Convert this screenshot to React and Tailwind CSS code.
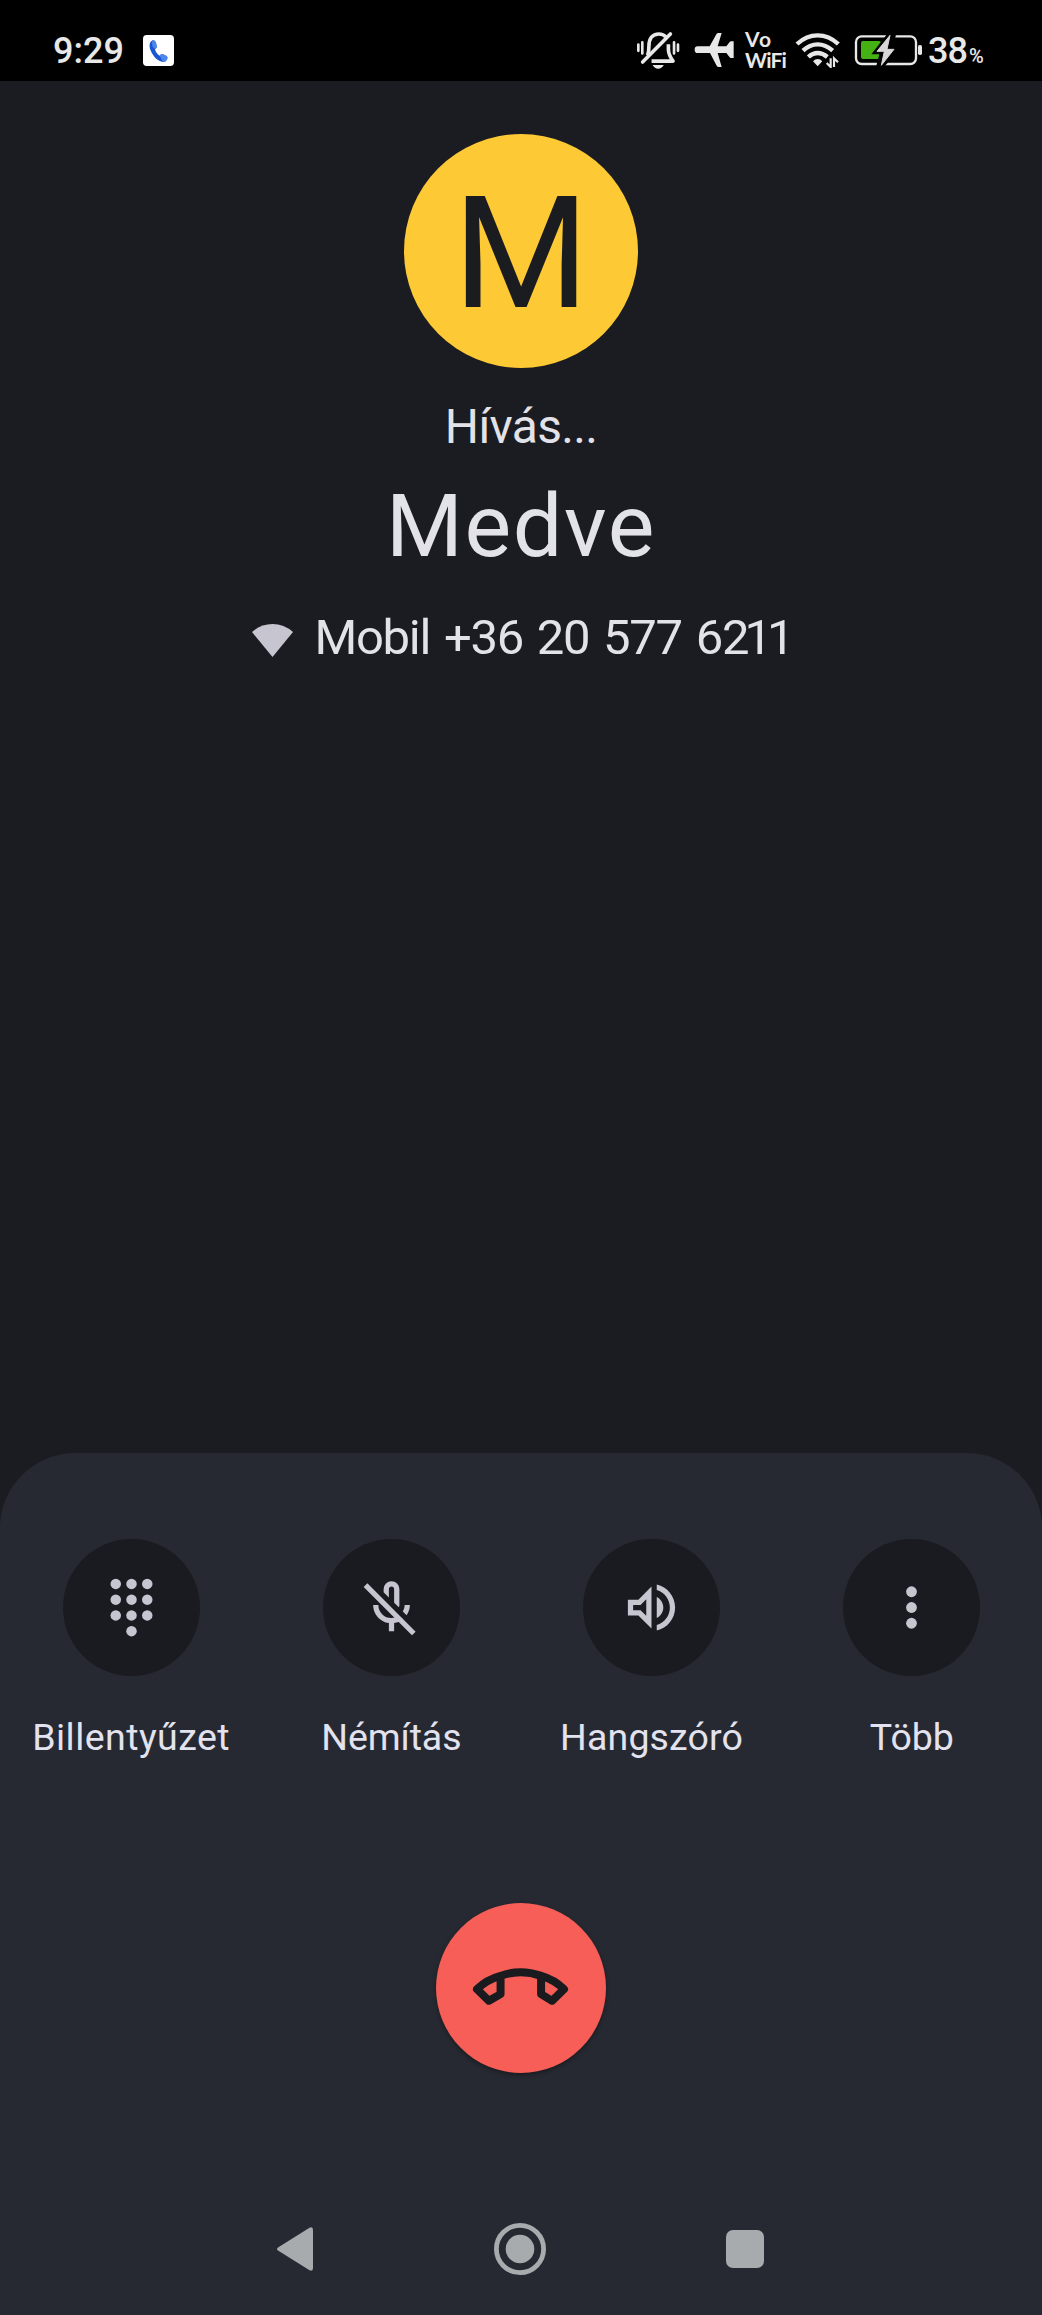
import { clsx } from "clsx";

const KeypadIcon = () => (
  <svg viewBox="0 0 24 24" className="size-[63px]" fill="currentColor">
    {[3, 9, 15].map((y) =>
      [6, 12, 18].map((x) => <circle key={`${x}-${y}`} cx={x} cy={y} r="2" />)
    )}
    <circle cx="12" cy="21" r="2" />
  </svg>
);

const MicOffIcon = () => (
  <svg viewBox="0 -960 960 960" className="size-[63px]" fill="currentColor">
    <path d="m710-362-58-58q14-23 21-48t7-52h80q0 44-13 83.5T710-362ZM592-482l-72-72v-206q0-17-11.5-28.5T480-800q-17 0-28.5 11.5T440-760v126l-80-80v-46q0-50 35-85t85-35q50 0 85 35t35 85v240q0 11-2.5 20t-5.5 18ZM440-120v-123q-104-14-172-93t-68-184h80q0 83 57.5 141.5T480-320q34 0 64.5-10.5T600-360l57 57q-29 23-63.5 39T520-243v123h-80Zm352 64L56-792l56-56 736 736-56 56Z" />
  </svg>
);

const SpeakerIcon = () => (
  <svg viewBox="0 0 24 24" className="size-[63px]" fill="currentColor">
    <path d="M3 9v6h4l5 5V4L7 9H3zm7-.17v6.34L7.83 13H5v-2h2.83L10 8.83zM16.5 12c0-1.77-1.02-3.29-2.5-4.03v8.05c1.48-.73 2.5-2.25 2.5-4.02zM14 3.23v2.06c2.89.86 5 3.54 5 6.71s-2.11 5.85-5 6.71v2.06c4.01-.91 7-4.49 7-8.77s-2.99-7.86-7-8.77z" />
  </svg>
);

const MoreIcon = () => (
  <svg viewBox="0 0 24 24" className="size-[63px]" fill="currentColor">
    <circle cx="12" cy="6" r="2.05" />
    <circle cx="12" cy="12" r="2.05" />
    <circle cx="12" cy="18" r="2.05" />
  </svg>
);

const actions = [
  { label: "Billentyűzet", icon: KeypadIcon, tracking: "tracking-[0.45px]" },
  { label: "Némítás", icon: MicOffIcon, tracking: "tracking-[-0.1px]" },
  { label: "Hangszóró", icon: SpeakerIcon, tracking: "tracking-[0.15px]" },
  { label: "Több", icon: MoreIcon, tracking: "tracking-normal" },
];

function StatusBar() {
  return (
    <header className="flex h-[81px] items-start bg-black pt-[30px] pl-[53px] text-[#e8e8e8]">
      <span className="w-[90px] text-[36px] leading-[42px] font-medium">9:29</span>
      <svg viewBox="0 0 93 93" className="mt-[5px] size-[31px]">
        <rect width="93" height="93" rx="11" fill="#fff" />
        <path
          d="M27 17c-9 5-9 19-3 32 7 16 21 31 36 32 6 0 11-4 13-10 1-4 0-7-4-9l-9-4c-4-1-7 0-10 4-7-4-12-11-14-19 4-3 6-6 5-10l-2-10c-2-6-7-9-12-6z"
          fill="#1a56cf"
        />
        <path
          d="M27 17c5-3 10 0 12 6l2 10c1 4-1 7-5 10l-8-9z M60 81c6 0 11-4 13-10 1-4 0-7-4-9l-9-4c-4-1-7 0-10 4z"
          fill="#4e86ec"
        />
      </svg>

      {/* muted bell with vibration marks */}
      <svg viewBox="48 64 134 118" className="mt-[1px] ml-[462px] h-[39px] w-[45px]" fill="none" stroke="currentColor">
        <path d="M54 105v19M66 98v34M162 98v34M174 105v19" strokeWidth="8" strokeLinecap="round" />
        <path d="M82 138c3-8 4-14 4-28 0-23 11-37 30-37 9 0 16 3 21 9" strokeWidth="11" />
        <path d="M145 104v16c0 16 5 22 14 35H94" strokeWidth="11" strokeLinejoin="round" />
        <path d="M151 73 67 158" strokeWidth="11" strokeLinecap="round" />
        <path d="M97 167h34q-6 11-17 11t-17-11z" fill="currentColor" stroke="none" />
      </svg>

      <svg viewBox="224 66 120 108" className="mt-[2px] ml-[13px] h-[36px] w-[40px]" fill="currentColor">
        <path d="M235 109h36l20-36q2-4 6-4h10l-12 40h26l10-13q1-2 4-2h8v50h-8q-3 0-4-2l-10-13h-26l12 42h-9q-4 0-6-4l-20-38h-37q-9 0-9-10t9-10z" />
      </svg>

      <div className="mt-[-1px] ml-[11px] flex w-[50px] flex-col font-['Lato',sans-serif] text-[21px] leading-[20.5px] font-bold">
        <span className="tracking-[1px]">Vo</span>
        <span className="tracking-[-0.8px]">WiFi</span>
      </div>

      <svg viewBox="-14 68 138 108" className="mt-[2px] h-[36px] w-[46px]" fill="none" stroke="currentColor" strokeWidth="13">
        <path d="M-8 104Q20 78 54 78T116 104M10 124Q30 105 54 105T99 124M26 143Q39 131 54 131T83 143" />
        <path d="M54 149q8 0 14 7l-14 15-14-15q6-7 14-7z" fill="currentColor" stroke="none" />
        <path d="M93 147v26L81 161M103 173v-26l12 12" strokeWidth="6.500" />
      </svg>

      <svg viewBox="160 72 207 96" className="mt-[4px] ml-[13px] h-[32px] w-[69px]">
        <rect x="166" y="79" width="180" height="83" rx="17" fill="none" stroke="currentColor" strokeWidth="7" />
        <rect x="181" y="93" width="60" height="54" rx="6" fill="#45b213" />
        <path d="M261 70 212 133h24l-10 38h24l54-61h-27l10-40z" fill="#000" />
        <path d="M268 76 229 124h22l-9 42 38-48h-21z" fill="#d9d9d9" stroke="#d9d9d9" strokeWidth="3" />
        <rect x="352" y="105" width="12" height="30" rx="5" fill="currentColor" />
      </svg>

      <span className="ml-[5px] text-[36px] leading-[42px] font-medium tracking-[-1px]">38</span>
      <span className="mt-[13px] ml-[2px] text-[20px] leading-[26px] font-medium tracking-tight">%</span>
    </header>
  );
}

function CallerInfo() {
  return (
    <section className="flex flex-1 flex-col items-center pt-[53px] text-[#e3e2e9]">
      <div className="flex size-[234px] items-center justify-center rounded-full bg-[#fdc934] pt-1.5 text-[156px] leading-none text-[#1b1c20]">
        M
      </div>
      <p className="mt-[29px] text-[48px] leading-[60px] tracking-[-0.7px]">Hívás...</p>
      <h1 className="mt-[15px] text-[88px] leading-[108px] tracking-[1.6px]">Medve</h1>
      <div className="mt-[28px] flex h-[60px] items-center">
        <svg viewBox="0 0 41 33" className="mt-1 mr-[21px] h-[33px] w-[41px] text-[#c6c5d0]" fill="currentColor">
          <path d="M0 8Q9 0 20.500 0T41 8L20.500 33z" />
        </svg>
        <span className="text-[49px] leading-[60px] tracking-[-1.3px] whitespace-nowrap [word-spacing:3px]">
          Mobil +36 20 577 6<span className="tracking-[-5px]">211</span>
        </span>
      </div>
    </section>
  );
}

function ActionButton({ label, icon: Icon, tracking }) {
  return (
    <button type="button" className="flex flex-col items-center">
      <span className="flex size-[137px] items-center justify-center rounded-full bg-[#1a1b20] text-[#c6c5d0]">
        <Icon />
      </span>
      <span className={clsx("mt-[37px] text-[37.5px] leading-[48px] whitespace-nowrap text-[#e3e2ef]", tracking)}>
        {label}
      </span>
    </button>
  );
}

function NavBar() {
  return (
    <nav className="mt-auto mb-[40px] flex h-[52px] items-center justify-center pr-[2px] text-[#a8abae]">
      <svg viewBox="0 0 36 44" className="h-[44px] w-[36px]" fill="currentColor">
        <path d="M1 20.500 32.500.700Q36-.800 36 3v38q0 3.800-3.500 2.300L1 23.500q-2-1.500 0-3z" />
      </svg>
      <svg viewBox="0 0 52 52" className="ml-[181px] size-[52px]" fill="currentColor">
        <circle cx="26" cy="26" r="23.600" fill="none" stroke="currentColor" strokeWidth="4.800" />
        <circle cx="26" cy="26" r="14.300" />
      </svg>
      <span className="ml-[180px] size-[38px] rounded-[7px] bg-current" />
    </nav>
  );
}

export default function App() {
  return (
    <div className="flex h-[2315px] w-[1042px] flex-col overflow-hidden bg-[#1b1c21] font-['Roboto',sans-serif]">
      <StatusBar />
      <CallerInfo />

      <section className="flex h-[862px] flex-col rounded-t-[75px] bg-[#262931] pt-[86px]">
        <div className="grid grid-cols-4 pl-[1px]">
          {actions.map((action) => (
            <ActionButton key={action.label} {...action} />
          ))}
        </div>

        <button
          type="button"
          aria-label="Hívás befejezése"
          className="mt-[142px] flex size-[170px] items-center justify-center self-center rounded-full bg-[#f65e57] shadow-[0_2px_4px_rgba(0,0,0,0.35)]"
        >
          <svg viewBox="155 260 292 116" className="mt-[-3px] mr-[2px] h-[39px] w-[97px]" fill="none" stroke="#1a1b1e" strokeWidth="24" strokeLinejoin="round">
            <path d="M241 286Q200 297 170 326L206 361 241 341V286Q301 264 363 286V341L396 361 432 326Q402 297 363 286" />
          </svg>
        </button>

        <NavBar />
      </section>
    </div>
  );
}
